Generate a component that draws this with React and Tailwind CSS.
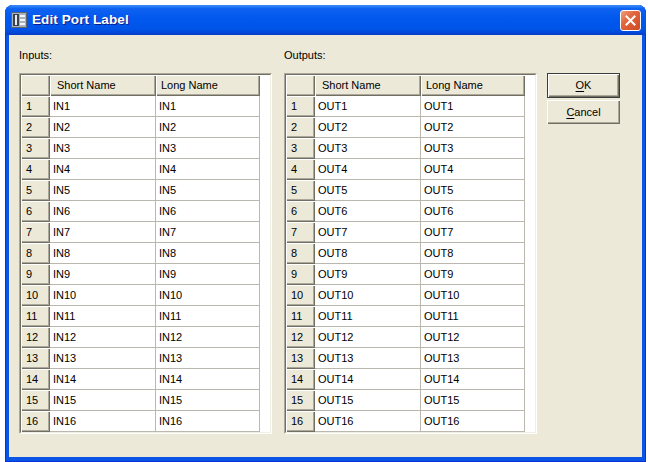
import React from "react";

const rows = Array.from({ length: 16 }, (_, i) => i + 1);

function Grid({ prefix }) {
  return (
    <div className="w-[253px] h-[361px] border border-t-[#aca899] border-l-[#aca899] border-r-white border-b-white">
      <div className="w-full h-full border border-t-[#716f64] border-l-[#716f64] border-r-[#f1efe2] border-b-[#f1efe2] bg-white">
        <div className="flex h-[21px]">
          <div className="w-[29px] h-full bg-[#ece9d8] shadow-[inset_1px_1px_0_#ffffff,inset_-1px_-1px_0_#716f64,inset_-2px_-2px_0_#aca899]" />
          <div className="w-[106px] h-full bg-[#ece9d8] pl-[7px] leading-[20px] shadow-[inset_1px_1px_0_#ffffff,inset_-1px_-1px_0_#716f64,inset_-2px_-2px_0_#aca899]">
            Short Name
          </div>
          <div className="w-[104px] h-full bg-[#ece9d8] pl-[5px] leading-[20px] shadow-[inset_1px_1px_0_#ffffff,inset_-1px_-1px_0_#716f64,inset_-2px_-2px_0_#aca899]">
            Long Name
          </div>
        </div>
        {rows.map((n) => (
          <div key={n} className="flex h-[21px]">
            <div className="w-[29px] h-full bg-[#ece9d8] pl-[5px] leading-[21px] shadow-[inset_1px_1px_0_#ffffff,inset_-1px_-1px_0_#716f64,inset_-2px_-2px_0_#aca899]">
              {n}
            </div>
            <div className="w-[106px] h-full border-r border-b border-[#b9b7ae] pl-[3px] leading-[20px]">
              {prefix}
              {n}
            </div>
            <div className="w-[104px] h-full border-r border-b border-[#b9b7ae] pl-[3px] leading-[20px]">
              {prefix}
              {n}
            </div>
          </div>
        ))}
      </div>
    </div>
  );
}

function Panel({ label, prefix, className = "" }) {
  return (
    <div className={"flex flex-col " + className}>
      <div className="h-[13px] leading-[13px] mb-[11px]">{label}</div>
      <Grid prefix={prefix} />
    </div>
  );
}

export default function App() {
  return (
    <div className="w-[648px] h-[462px] bg-white pt-[5px] pl-[5px] overflow-hidden text-[11px] text-black font-['Liberation_Sans',Arial,sans-serif]">
      <div className="w-[641px] h-[457px] flex flex-col rounded-t-[8px] bg-[#0a54e6] shadow-[inset_1px_0_0_#0831d9,inset_-1px_0_0_#0831d9,inset_0_-1px_0_#0831d9]">
        {/* title bar */}
        <div className="h-[30px] flex items-center pl-[6px] pr-[5px] rounded-t-[8px] bg-[linear-gradient(to_bottom,#3d8ff7_0%,#0f62f0_12%,#0058ee_45%,#0054e8_80%,#0048d8_92%,#0a3cc4_100%)]">
          <svg width="16" height="16" viewBox="0 0 16 16" className="shrink-0">
            <rect x="0.5" y="0.5" width="15" height="15" fill="#a9b2bd" stroke="#5d6670" />
            <rect x="2" y="2" width="6" height="12" fill="#3b434c" />
            <rect x="4" y="3" width="2" height="10" fill="#e8edf2" />
            <rect x="9" y="3" width="5" height="2" fill="#f4f6f8" />
            <rect x="9" y="7" width="5" height="2" fill="#f4f6f8" />
            <rect x="9" y="11" width="5" height="2" fill="#f4f6f8" />
          </svg>
          <div className="ml-[5px] text-white font-bold text-[13.5px] leading-none tracking-[0.1px] [text-shadow:1px_1px_0_#0a1e8c]">
            Edit Port Label
          </div>
          <div className="ml-auto mt-[1px] w-[21px] h-[21px] rounded-[3px] border border-white flex items-center justify-center bg-[linear-gradient(135deg,#f0a080_0%,#e2643d_40%,#cf4a22_100%)]">
            <svg width="11" height="11" viewBox="0 0 11 11">
              <path d="M1.5 1.5 L9.5 9.5 M9.5 1.5 L1.5 9.5" stroke="white" strokeWidth="2" strokeLinecap="square" />
            </svg>
          </div>
        </div>
        {/* client */}
        <div className="flex-1 mx-[4px] mb-[5px] bg-[#ece9d8]">
          <div className="flex pl-[10px] pt-[14px]">
            <Panel label="Inputs:" prefix="IN" />
            <Panel label="Outputs:" prefix="OUT" className="ml-[12px]" />
            <div className="ml-[10px] mt-[24px] flex flex-col gap-[2px]">
              <div className="w-[73px] h-[25px] border border-[#3c3c3c]">
                <div className="w-full h-full bg-[#ece9d8] flex items-center justify-center shadow-[inset_1px_1px_0_#ffffff,inset_-1px_-1px_0_#716f64,inset_-2px_-2px_0_#aca899]">
                  <span>
                    <span className="underline underline-offset-[2px]">O</span>K
                  </span>
                </div>
              </div>
              <div className="w-[73px] h-[24px] bg-[#ece9d8] flex items-center justify-center shadow-[inset_1px_1px_0_#ffffff,inset_-1px_-1px_0_#716f64,inset_-2px_-2px_0_#aca899]">
                <span>
                  <span className="underline underline-offset-[2px]">C</span>ancel
                </span>
              </div>
            </div>
          </div>
        </div>
      </div>
    </div>
  );
}
